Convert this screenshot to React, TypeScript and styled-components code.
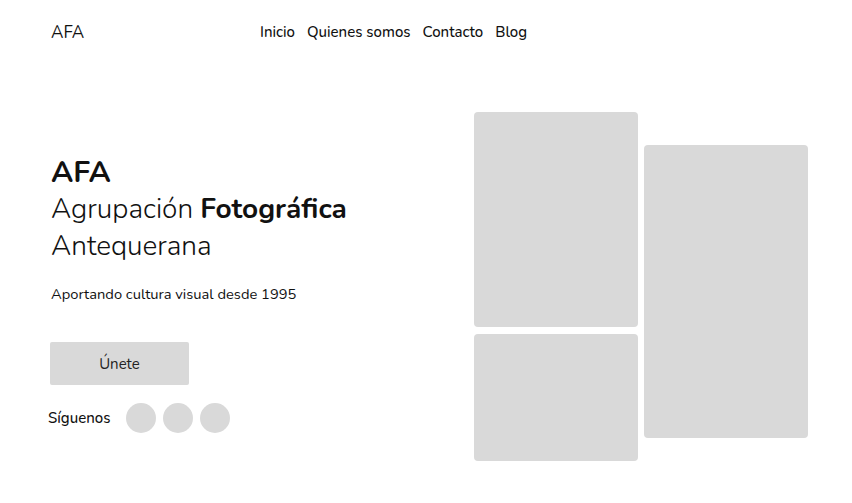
import React from "react";
import styled, { createGlobalStyle } from "styled-components";

const GlobalStyle = createGlobalStyle`
  body {
    margin: 0;
    background: #ffffff;
    font-family: "Nunito", "Lato", "Noto Sans", sans-serif;
    color: #111111;
  }
`;

const App = () => {
  return (
    <>
      <GlobalStyle />
      <Page>
        <Header>
          <Logo>AFA</Logo>
          <Nav>
            <a>Inicio</a>
            <a>Quienes somos</a>
            <a>Contacto</a>
            <a>Blog</a>
          </Nav>
        </Header>
        <Hero>
          <Intro>
            <Title>AFA</Title>
            <Subtitle>
              Agrupación <b>Fotográfica</b>
              <br />
              Antequerana
            </Subtitle>
            <Tagline>Aportando cultura visual desde 1995</Tagline>
            <JoinButton>Únete</JoinButton>
            <Social>
              <span>Síguenos</span>
              <Circle />
              <Circle />
              <Circle />
            </Social>
          </Intro>
          <Gallery>
            <Column>
              <Photo $h={215} />
              <Photo $h={127} />
            </Column>
            <Column $offset={33}>
              <Photo $h={293} />
            </Column>
          </Gallery>
        </Hero>
      </Page>
    </>
  );
};

export default App;

const Page = styled.div`
  width: 852px;
  height: 503px;
  padding: 0 44px 0 51px;
  box-sizing: border-box;
`;

const Header = styled.header`
  display: flex;
  align-items: center;
  height: 64px;
`;

const Logo = styled.div`
  font-size: 17px;
  width: 209px;
`;

const Nav = styled.nav`
  display: flex;
  gap: 12px;
  font-size: 15px;
  font-weight: 500;

  a {
    color: #111;
    cursor: pointer;
  }
`;

const Hero = styled.section`
  display: flex;
  justify-content: space-between;
  margin-top: 48px;
`;

const Intro = styled.div`
  padding-top: 42px;
`;

const Title = styled.h1`
  margin: 0;
  font-size: 30px;
  font-weight: 700;
  line-height: 37px;
`;

const Subtitle = styled.h2`
  margin: 0;
  font-size: 28px;
  font-weight: 300;
  line-height: 37px;

  b {
    font-weight: 700;
  }
`;

const Tagline = styled.p`
  margin: 19px 0 0;
  font-size: 14.7px;
`;

const JoinButton = styled.button`
  display: block;
  width: 139px;
  height: 43px;
  margin: 38px 0 0 -1px;
  border: none;
  border-radius: 2px;
  background: #d9d9d9;
  font-family: inherit;
  font-size: 15px;
  color: #222;
`;

const Social = styled.div`
  display: flex;
  align-items: center;
  gap: 7px;
  margin: 18px 0 0 -3px;
  font-size: 15px;
  font-weight: 500;

  span {
    margin-right: 9px;
  }
`;

const Circle = styled.div`
  width: 30px;
  height: 30px;
  border-radius: 50%;
  background: #d9d9d9;
`;

const Gallery = styled.div`
  display: flex;
  gap: 6px;
`;

const Column = styled.div<{ $offset?: number }>`
  display: flex;
  flex-direction: column;
  gap: 7px;
  margin-top: ${(p) => p.$offset ?? 0}px;
`;

const Photo = styled.div<{ $h: number }>`
  width: 164px;
  height: ${(p) => p.$h}px;
  border-radius: 4px;
  background: #d9d9d9;
`;
